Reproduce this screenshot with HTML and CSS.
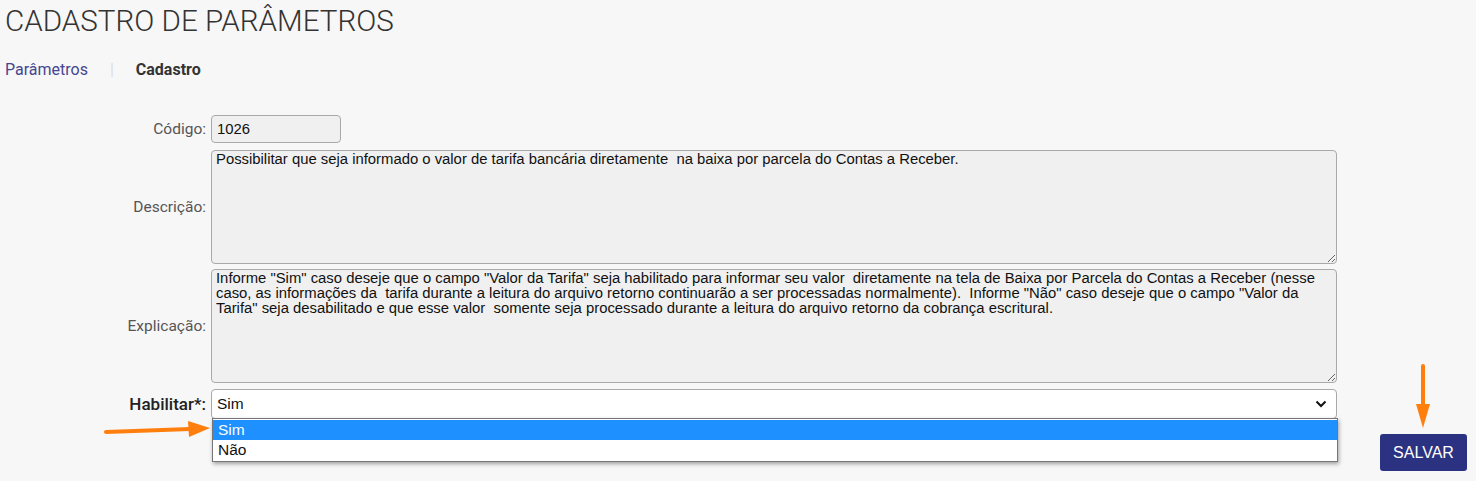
FILE: index.html
```html
<!DOCTYPE html>
<html>
<head>
  <meta charset="utf-8">
  <link rel="stylesheet" href="styles.css">
</head>
<body>
  <div class="page">
    <h1 class="title">CADASTRO DE PARÂMETROS</h1>
    <div class="breadcrumb">
      <a class="crumb" href="#">Parâmetros</a>
      <span class="sep">|</span>
      <span class="crumb current">Cadastro</span>
    </div>

    <div class="form">
      <div class="row row-code">
        <label class="label">Código:</label>
        <input class="input code" type="text" value="1026" readonly>
      </div>
      <div class="row row-desc">
        <label class="label">Descrição:</label>
        <textarea class="input area" readonly>Possibilitar que seja informado o valor de tarifa bancária diretamente  na baixa por parcela do Contas a Receber.</textarea>
      </div>
      <div class="row row-expl">
        <label class="label">Explicação:</label>
        <textarea class="input area" readonly>Informe "Sim" caso deseje que o campo "Valor da Tarifa" seja habilitado para informar seu valor  diretamente na tela de Baixa por Parcela do Contas a Receber (nesse caso, as informações da  tarifa durante a leitura do arquivo retorno continuarão a ser processadas normalmente).  Informe "Não" caso deseje que o campo "Valor da Tarifa" seja desabilitado e que esse valor  somente seja processado durante a leitura do arquivo retorno da cobrança escritural.</textarea>
      </div>
      <div class="row row-select">
        <label class="label strong">Habilitar*:</label>
        <div class="select-wrap">
          <div class="select">
            <span>Sim</span>
            <svg class="chevron" width="12" height="8" viewBox="0 0 12 8"><path d="M1.5 1.5 L6 6 L10.5 1.5" fill="none" stroke="#111" stroke-width="2"/></svg>
          </div>
          <ul class="options">
            <li class="option selected">Sim</li>
            <li class="option">Não</li>
          </ul>
        </div>
      </div>
    </div>

    <div class="actions">
      <button class="btn">SALVAR</button>
    </div>
  </div>

  <svg class="arrow arrow-left" width="110" height="24" viewBox="0 0 110 24">
    <path d="M2 14 L86 11" stroke="#ff7f0e" stroke-width="4" stroke-linecap="round"/>
    <path d="M84 3 L106 10 L85 19 Z" fill="#ff7f0e"/>
  </svg>
  <svg class="arrow arrow-down" width="20" height="66" viewBox="0 0 20 66">
    <path d="M10 2 L10 42" stroke="#ff7f0e" stroke-width="4" stroke-linecap="round"/>
    <path d="M3 40 L17 40 L10 64 Z" fill="#ff7f0e"/>
  </svg>
</body>
</html>
```

FILE: styles.css
```css
body {
  margin: 0;
  background: #f7f7f7;
  font-family: Roboto, "Liberation Sans", sans-serif;
  color: #333;
}

.page {
  padding: 0 9px 0 5px;
}

.title {
  font-size: 29.6px;
  font-weight: 300;
  margin: 0;
  padding-top: 4px;
  line-height: 34px;
  color: #333;
}

.breadcrumb {
  display: flex;
  align-items: center;
  margin-top: 19px;
  font-size: 16px;
  height: 24px;
}

.crumb {
  color: #45468f;
  text-decoration: none;
}

.crumb.current {
  color: #333;
  font-weight: 700;
}

.sep {
  color: #ddd;
  margin: 0 22px 0 22px;
}

.form {
  margin-top: 34px;
  display: flex;
  flex-direction: column;
  width: 1332px;
}

.row {
  display: grid;
  grid-template-columns: 206px 1fr;
  align-items: center;
}

.row-desc {
  margin-top: 7px;
}

.row-select {
  margin-top: 6px;
}

.row-expl {
  margin-top: 5px;
}

.label {
  text-align: right;
  font-size: 15.5px;
  color: #555;
  padding-right: 5px;
}

.label.strong {
  font-size: 17px;
  color: #222;
  font-weight: 500;
}

.input {
  box-sizing: border-box;
  font-family: Arial, "Liberation Sans", sans-serif;
  font-size: 14.85px;
  color: #111;
  background: #f0f0f0;
  border: 1px solid #a9a9a9;
  border-radius: 4px;
  margin: 0;
}

.code {
  width: 130px;
  height: 28px;
  padding: 2px 5px;
}

.area {
  width: 100%;
  height: 114px;
  padding: 1px 4px;
  line-height: 15px;
  resize: vertical;
  display: block;
}

.select-wrap {
  position: relative;
}

.select {
  box-sizing: border-box;
  height: 30px;
  background: #fff;
  border: 1px solid #a9a9a9;
  border-radius: 4px;
  display: flex;
  align-items: center;
  justify-content: space-between;
  padding: 0 9px 0 5px;
  font-family: Arial, "Liberation Sans", sans-serif;
  font-size: 15.5px;
  color: #111;
}

.options {
  position: absolute;
  top: 29px;
  left: 1px;
  right: -1px;
  margin: 0;
  padding: 1px 0;
  list-style: none;
  background: #fff;
  border: 1px solid #767676;
  box-shadow: 1px 2px 4px rgba(0, 0, 0, 0.35);
  font-family: Arial, "Liberation Sans", sans-serif;
  font-size: 15.5px;
  color: #111;
  z-index: 2;
}

.option {
  height: 20px;
  line-height: 20px;
  padding: 0 5px;
}

.option.selected {
  background: #1e90ff;
  color: #fff;
}

.actions {
  display: flex;
  justify-content: flex-end;
  margin-top: 15px;
}

.btn {
  background: #2b3281;
  color: #fff;
  border: none;
  border-radius: 3px;
  width: 87px;
  height: 37px;
  font-family: Arial, "Liberation Sans", sans-serif;
  font-size: 16px;
}

.arrow {
  position: absolute;
}

.arrow-left {
  left: 104px;
  top: 418px;
}

.arrow-down {
  left: 1413px;
  top: 364px;
}
```
